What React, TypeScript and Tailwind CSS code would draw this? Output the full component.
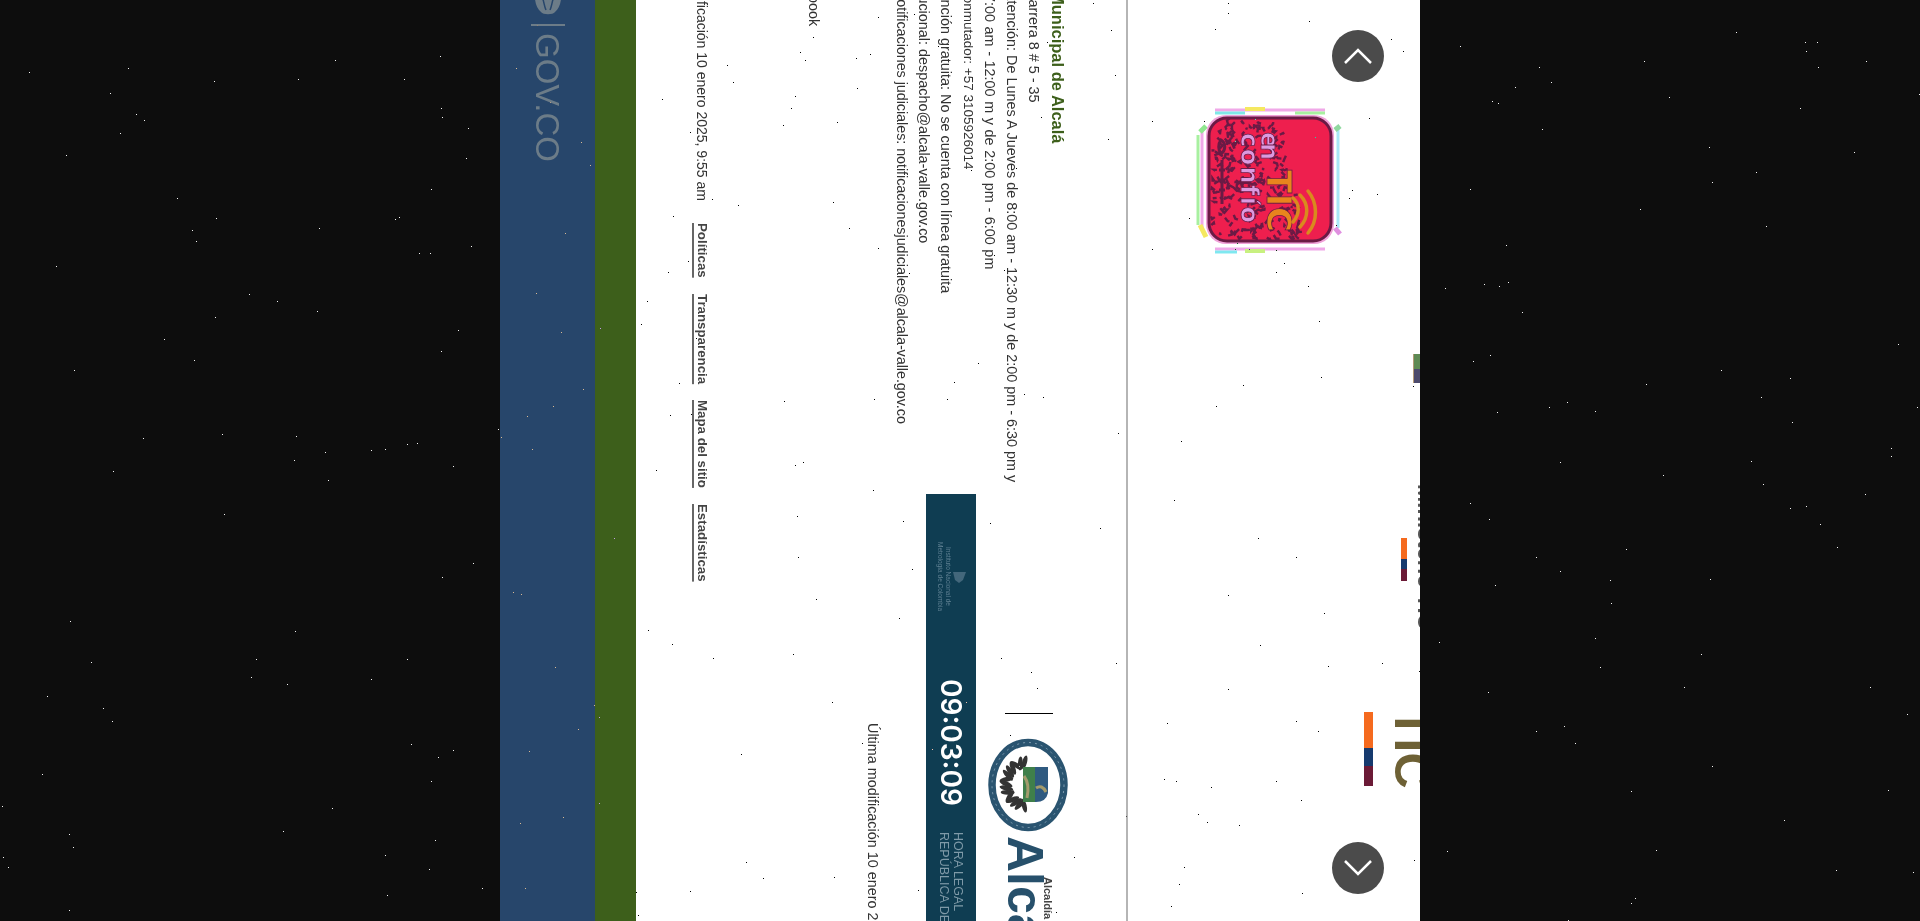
import React from 'react';

// stars drawn over the whole page, blended so they flip on white panels
const makeStars = () => {
    const stars: { x: number; y: number }[] = [];
    let seed = 4711;
    const next = () => {
        seed = (seed * 16807) % 2147483647;
        return seed / 2147483647;
    };
    for (let i = 0; i < 340; i++) {
        stars.push({ x: Math.floor(next() * 1920), y: Math.floor(next() * 921) });
    }
    return stars;
};

const makeBlotches = () => {
    const out: string[] = [];
    let seed = 977;
    const next = () => {
        seed = (seed * 16807) % 2147483647;
        return seed / 2147483647;
    };
    for (let i = 0; i < 240; i++) {
        const x = 24 + next() * 88;
        const y = 22 + next() * 116;
        if (x > 98 && y < 90) continue;
        out.push(`M${x.toFixed(1)} ${y.toFixed(1)}l${(next() * 8 - 4).toFixed(1)} ${(next() * 8 - 4).toFixed(1)}l${(next() * 8 - 4).toFixed(1)} ${(next() * 8 - 4).toFixed(1)}`);
    }
    return out.join('');
};

const stars = makeStars();
const blotches = makeBlotches();

// leaves of the laurel round the shield, left half of the seal
const laurel = Array.from({ length: 15 }, (_, i) => 100 + i * 11.5);

const EnTicLogo = () => (
    <svg width="160" height="160" viewBox="0 0 160 160" className="mt-[100px] mr-[70px] shrink-0 [writing-mode:horizontal-tb]">
        <g fill="none" strokeWidth="3">
            <path d="M25 10h110" stroke="#f0a8e8" />
            <path d="M25 13h30" stroke="#7fe8e8" />
            <path d="M55 9h20" stroke="#f5e860" strokeWidth="4" />
            <path d="M105 13h30" stroke="#a8f0a0" />
            <path d="M25 149h110" stroke="#f0a8e8" />
            <path d="M25 152h22" stroke="#7fe8f0" />
            <path d="M55 151h20" stroke="#c8f080" strokeWidth="4" />
            <path d="M12 28v100" stroke="#f0a8e8" />
            <path d="M8 35v90" stroke="#a8f0a0" />
            <path d="M148 28v100" stroke="#a8e8f8" />
            <path d="M10 125l6 12" stroke="#f5e860" strokeWidth="5" />
            <path d="M10 32l6-6" stroke="#90e890" strokeWidth="5" />
            <path d="M145 30l5-4" stroke="#90d8a0" strokeWidth="5" />
            <path d="M145 128l5 6" stroke="#e090e0" strokeWidth="5" />
        </g>
        <rect x="16" y="15" width="128" height="129" rx="20" fill="#f0a0d8" />
        <rect x="19" y="18" width="122" height="123" rx="18" fill="#ee1f4e" stroke="#6b1a45" strokeWidth="3" />
        <path d={blotches} fill="none" stroke="#6b1a45" strokeWidth="2.4" />
        <path d="M31 40c5 3 5 10 0 14c-3-4-3-10 0-14zM32 60v44M29 70h6M29 80h6M29 90h6" fill="none" stroke="#6b1a45" strokeWidth="3" />
        <g transform="rotate(90 0 0)" fontFamily="'DejaVu Sans', sans-serif" fontWeight="700" stroke="#6b1a45" strokeWidth="0.8">
            <text x="32" y="-71" fontSize="24" fill="#dc9ae0" textLength="28">en</text>
            <text x="33" y="-51" fontSize="24" fill="#dc9ae0" textLength="90">confío</text>
            <text x="70" y="-77" fontSize="34" fill="#e8851d" textLength="62">TIC</text>
        </g>
        <path d="M103 98c7 6 7 16 0 24M110 95c9 9 9 22 0 32M118 91c10 12 10 30 0 42" fill="none" stroke="#d98a1e" strokeWidth="3.5" strokeLinecap="round" />
    </svg>
);

const AlcaldiaSeal = () => (
    <svg width="80" height="94" viewBox="0 0 80 94" className="mt-[24px] shrink-0 [writing-mode:horizontal-tb]">
        <ellipse cx="40" cy="47" rx="36" ry="42.5" fill="#fff" stroke="#2a5470" strokeWidth="7.5" />
        <ellipse cx="40" cy="47" rx="36" ry="42.5" fill="none" stroke="#7f9cb0" strokeWidth="1" strokeDasharray="2 4" />
        {laurel.map((deg) => (
            <ellipse
                key={deg}
                cx="18"
                cy="46"
                rx="7"
                ry="2.4"
                fill="#333"
                transform={`rotate(${deg - 180} 40 46) rotate(${deg % 2 ? 24 : -24} 18 46)`}
            />
        ))}
        <path d="M35 29h25v26q-2 9-12 9h-13z" fill="#2f5a80" />
        <path d="M35 29h12v35H35z" fill="#3f7f4a" />
        <path d="M36 38q6 8 3 22M48 50q6-4 10 4" stroke="#a39b6c" strokeWidth="3" fill="none" />
    </svg>
);

const FlagBar = ({ big }: { big?: boolean }) =>
    big ? (
        <div className="mt-1 mr-[13px] flex h-[74px] w-[9px] shrink-0">
            <div className="h-[36px] w-full bg-[#f56a1e]" />
            <div className="h-[18px] w-full bg-[#163a6e]" />
            <div className="h-[20px] w-full bg-[#6b1a36]" />
        </div>
    ) : (
        <div className="mt-[54px] mr-[7px] flex h-[43px] w-[6px] shrink-0">
            <div className="h-[21px] w-full bg-[#f56a1e]" />
            <div className="h-[10px] w-full bg-[#163a6e]" />
            <div className="h-[12px] w-full bg-[#6b1a36]" />
        </div>
    );

const ChevronButton = ({ up }: { up?: boolean }) => (
    <button
        className={`absolute left-[1332px] flex h-[52px] w-[52px] items-center justify-center rounded-full bg-[#4b4b4b] ${
            up ? 'top-[30px]' : 'top-[842px]'
        }`}
    >
        <svg width="30" height="18" viewBox="0 0 30 18">
            <path d={up ? 'M2 16L15 3l13 13' : 'M2 2l13 13L28 2'} fill="none" stroke="#fff" strokeWidth="2.5" />
        </svg>
    </button>
);

const contactLines = [
    { text: 'Carrera 8 # 5 - 35', cls: '-mt-[11px]' },
    { text: 'Atención: De Lunes A Jueves de 8:00 am - 12:30 m y de 2:00 pm - 6:30 pm y', cls: '-mt-[9px]' },
    { text: '7:00 am - 12:00 m y de 2:00 pm - 6:00 pm', cls: '-mt-[6px] [word-spacing:0.6px]' },
    { text: 'Conmutador: +57 3105926014', cls: '-mt-[14px] text-[13.5px]' },
    { text: 'Atención gratuita: No se cuenta con línea gratuita', cls: '-mt-[22px]' },
    { text: 'Institucional: despacho@alcala-valle.gov.co', cls: '-mt-[35px]' },
    { text: 'Notificaciones judiciales: notificacionesjudiciales@alcala-valle.gov.co', cls: '-mt-[11px] tracking-[-0.06px]' },
];

const footerLinks = ['Políticas', 'Transparencia', 'Mapa del sitio', 'Estadísticas'];

export default function App() {
    return (
        <div className="relative flex h-[921px] w-[1920px] justify-center overflow-hidden bg-[#0d0d0d] font-['Liberation_Sans',sans-serif]">
            <div className="flex h-[921px] w-[920px] flex-col overflow-hidden bg-white [writing-mode:vertical-rl]">
                {/* top of the page, mostly cut off at the right */}
                <section className="flex h-[921px] w-[294px] shrink-0 items-start border-l-2 border-[#b5b5b5]">
                    <EnTicLogo />
                    <div className="mt-[94px] flex h-[29px] w-[7px] shrink-0 border-l border-[#b39a78]">
                        <div className="h-[15px] w-full bg-[#5e8a54]" />
                        <div className="h-[14px] w-full bg-[#4c4a6c]" />
                    </div>
                    <div className="mt-[101px] flex h-[151px] shrink-0 flex-col">
                        <div className="-mr-[16px] w-[22px] text-[22px] leading-[22px] font-bold whitespace-nowrap text-[#555]">
                            Ministerio TIC
                        </div>
                        <FlagBar />
                    </div>
                    <div className="mt-[73px] flex shrink-0 flex-col">
                        <div className="-mr-[18px] w-[52px] text-[50px] leading-[52px] font-bold text-[#6e6135]">TIC</div>
                        <FlagBar big />
                    </div>
                </section>

                {/* footer block */}
                <section className="flex h-[921px] w-[490px] shrink-0 flex-col pr-[56px] text-[14.4px] text-[#333]">
                    <div className="flex w-[269px] shrink-0">
                        <div className="h-[494px] w-[269px] shrink-0">
                            <div className="-mt-[9px] text-[16.5px] leading-[25px] font-bold whitespace-nowrap text-[#3d5f1b]">
                                Municipal de Alcalá
                            </div>
                            {contactLines.map((line) => (
                                <div key={line.text} className={`${line.cls} leading-[22px] whitespace-nowrap`}>
                                    {line.text}
                                </div>
                            ))}
                            <div className="-mt-[37px] mr-[66px] leading-[22px] whitespace-nowrap">Facebook</div>
                        </div>
                        <div className="flex h-[427px] w-0 shrink-0 flex-col">
                            <div className="mr-[2px] flex h-[427px] w-[80px] shrink-0 items-start overflow-hidden">
                                <div className="mt-[219px] mr-[15px] h-px w-[48px] shrink-0 bg-black" />
                                <AlcaldiaSeal />
                                <div className="mt-[4px] mr-[15px] flex shrink-0 flex-col items-start text-[#27506b]">
                                    <div className="mt-[41px] w-[11px] text-[11px] leading-[11px] font-bold whitespace-nowrap text-[#444]">
                                        Alcaldía
                                    </div>
                                    <div className="-mr-[2px] w-[38px] text-[50px] leading-[38px] font-bold whitespace-nowrap">Alcalá</div>
                                </div>
                            </div>
                            <div className="mr-[12px] flex h-[427px] w-[50px] shrink-0 items-center bg-[#0f3d52] text-white">
                                <div className="mt-[49px] flex h-[67px] shrink-0 flex-col items-center">
                                    <svg width="15" height="14" viewBox="0 0 15 14" className="shrink-0 [writing-mode:horizontal-tb]">
                                        <path d="M1 2h13l-3 8-4 3-4-3z" fill="#43677b" />
                                    </svg>
                                    <div className="text-center text-[6.5px] leading-[8px] whitespace-nowrap text-[#5f8093]">
                                        Instituto Nacional de
                                        <br />
                                        Metrología de Colombia
                                    </div>
                                </div>
                                <div className="mt-[69px] shrink-0 font-['Inter'] text-[28px] leading-none font-semibold whitespace-nowrap">
                                    09:03:09
                                </div>
                                <div className="mt-[26px] shrink-0 text-[12.5px] leading-[14px] whitespace-nowrap text-[#7f9aa8]">
                                    HORA LEGAL
                                    <br />
                                    REPÚBLICA DE COLOMBIA
                                </div>
                            </div>
                            <div className="mt-[229px] mr-[42px] leading-[22px] whitespace-nowrap">
                                Última modificación 10 enero 2025, 9:55 am
                            </div>
                        </div>
                    </div>

                    <div className="mr-[88px] flex shrink-0 gap-[16px] leading-[22px] whitespace-nowrap">
                        <span className="-mt-[73px] mb-[6px] text-[14px]">Última modificación 10 enero 2025, 9:55 am</span>
                        {footerLinks.map((link) => (
                            <a key={link} className="text-[13.3px] font-bold text-[#444] underline decoration-[#666] decoration-2 underline-offset-1">
                                {link}
                            </a>
                        ))}
                    </div>
                </section>

                <div className="h-[921px] w-[41px] shrink-0 bg-[#3d5f1b]" />

                <div className="flex h-[921px] w-[95px] shrink-0 items-center bg-[#27466b] text-[#6c7c88]">
                    <svg width="30" height="30" viewBox="0 0 30 30" className="-mt-[14px] shrink-0 [writing-mode:horizontal-tb]">
                        <path d="M2 4c3-3 6 0 8-2c2 2 8 2 10 0c2 2 5-1 8 2c1 10-1 18-6 22c-2 3-12 3-14 0C3 22 1 14 2 4z" fill="#6c7c88" />
                        <path d="M8 8c3 6 3 12 5 16M22 8c-3 6-3 12-5 16" stroke="#27466b" strokeWidth="1.5" fill="none" />
                    </svg>
                    <div className="mt-[8px] h-[2px] w-[34px] shrink-0 bg-[#6c7c88]" />
                    <span className="mt-[7px] text-[33px] leading-none">GOV.CO</span>
                </div>
            </div>

            <ChevronButton up />
            <ChevronButton />

            <svg className="pointer-events-none absolute inset-0 mix-blend-difference" width="1920" height="921">
                {stars.map((s, i) => (
                    <rect key={i} x={s.x} y={s.y} width="1" height="1" fill="#fff" />
                ))}
            </svg>
        </div>
    );
}
